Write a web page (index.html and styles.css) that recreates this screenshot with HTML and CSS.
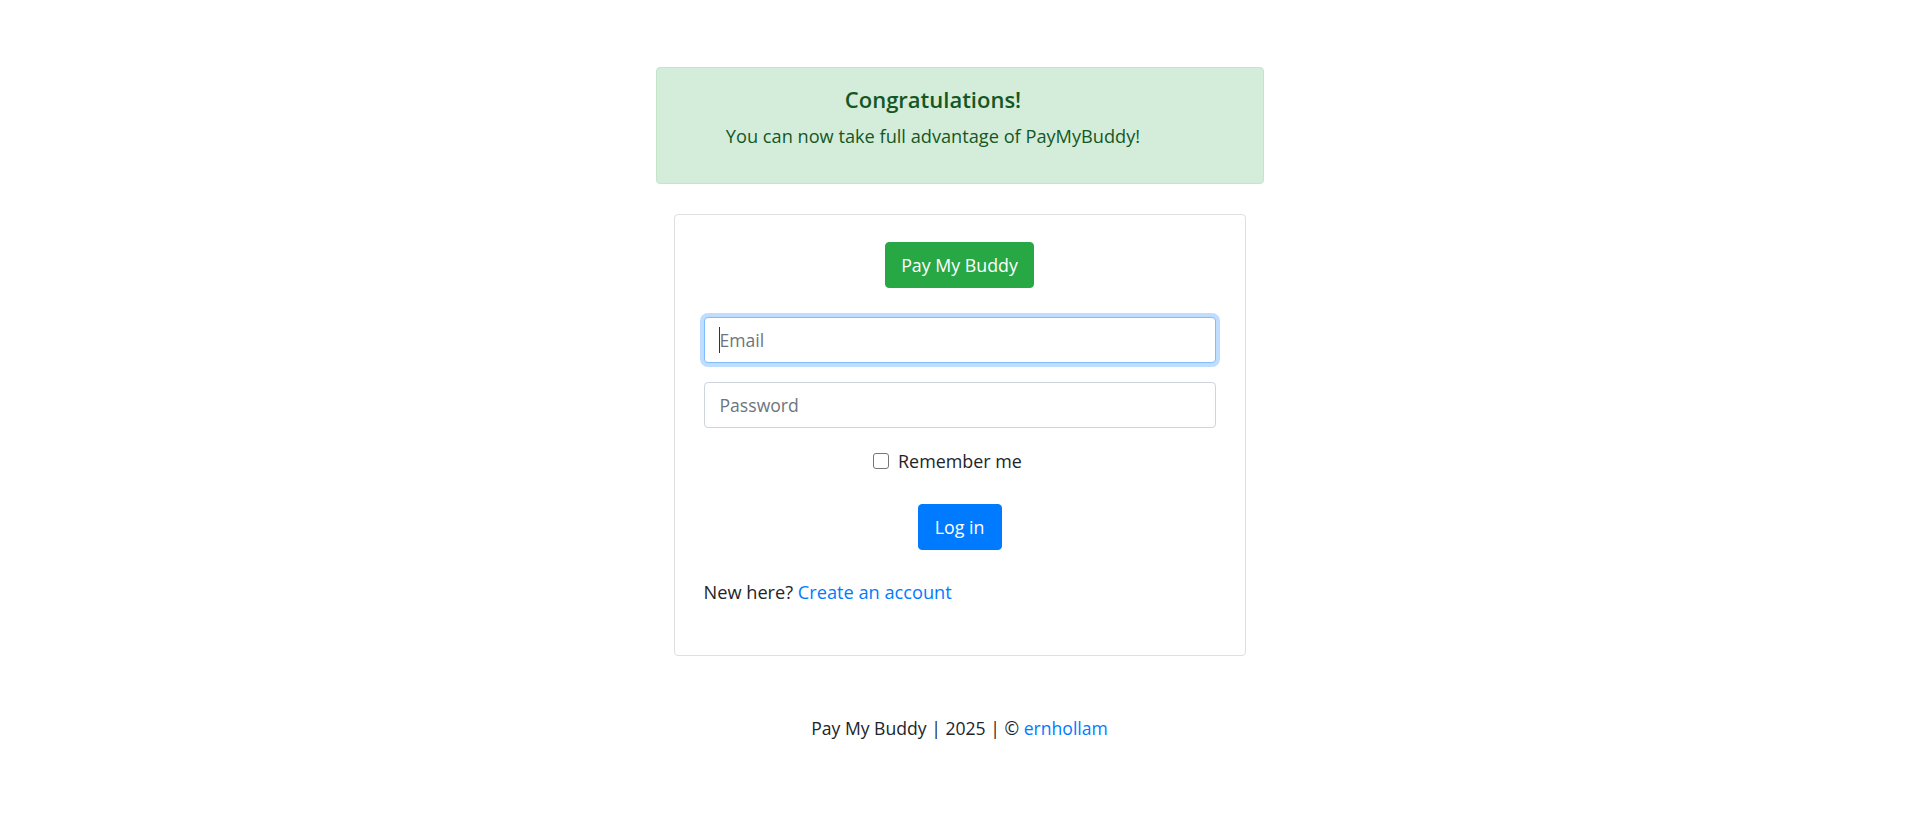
FILE: index.html
```html
<!DOCTYPE html>
<html lang="en">
<head>
<meta charset="utf-8">
<title>Pay My Buddy - Log in</title>
<link rel="stylesheet" href="styles.css">
</head>
<body>
<main class="page">
  <div class="alert">
    <h5 class="alert-heading">Congratulations!</h5>
    <p class="alert-text">You can now take full advantage of PayMyBuddy!</p>
  </div>

  <form class="card">
    <div class="brand-row">
      <a class="btn btn-success">Pay My Buddy</a>
    </div>
    <div class="field">
      <input class="input input-focus" type="email" placeholder="Email">
      <span class="caret"></span>
    </div>
    <div class="field">
      <input class="input" type="password" placeholder="Password">
    </div>
    <label class="remember">
      <input class="check" type="checkbox">
      <span>Remember me</span>
    </label>
    <div class="submit-row">
      <button class="btn btn-primary" type="button">Log in</button>
    </div>
    <p class="signup">New here? <a href="#" class="link">Create an account</a></p>
  </form>

  <footer class="footer">Pay My Buddy | 2025 | © <a href="#" class="link">ernhollam</a></footer>
</main>
</body>
</html>
```

FILE: styles.css
```css
* { box-sizing: border-box; }

html, body {
  margin: 0;
  padding: 0;
  background: #fff;
}

body {
  font-family: "Open Sans", "Noto Sans", sans-serif;
  font-size: 17.6px;
  color: #212529;
}

.page {
  display: flex;
  flex-direction: column;
  align-items: center;
  padding-top: 67px;
}

.alert {
  width: 608px;
  height: 117px;
  background: #d4edda;
  border: 1px solid #c3e6cb;
  border-radius: 4px;
  color: #155724;
  padding: 14px 77px 0 24px;
  text-align: center;
}

.alert-heading {
  margin: 0;
  font-size: 22px;
  font-weight: 600;
  line-height: 34px;
}

.alert-text {
  margin: 6px 0 0;
  font-size: 18.2px;
  line-height: 28px;
}

.card {
  margin-top: 30px;
  width: 572px;
  height: 442px;
  border: 1px solid #dfdfdf;
  border-radius: 4px;
  padding: 27px 29px 0 29px;
  display: flex;
  flex-direction: column;
}

.brand-row, .submit-row {
  display: flex;
  justify-content: center;
}

.btn {
  display: inline-block;
  height: 46px;
  padding: 0 15px;
  border: 1px solid transparent;
  border-radius: 4px;
  color: #fff;
  font-family: inherit;
  font-size: 17.8px;
  line-height: 44px;
  text-decoration: none;
  cursor: pointer;
}

.btn-success {
  background: #28a745;
  border-color: #28a745;
}

.btn-primary {
  background: #007bff;
  border-color: #007bff;
  width: 84px;
  padding: 0;
  text-align: center;
}

.field {
  position: relative;
  margin-top: 29px;
}

.field + .field {
  margin-top: 19px;
}

.input {
  display: block;
  width: 100%;
  height: 46px;
  padding: 0 15px;
  border: 1px solid #ced4da;
  border-radius: 4px;
  font-family: inherit;
  font-size: 17.6px;
  color: #495057;
  background: #fff;
  outline: none;
}

.input::placeholder {
  color: #6c757d;
  opacity: 1;
}

.input-focus {
  border-color: #80bdff;
  box-shadow: 0 0 0 4px rgba(0, 123, 255, 0.25);
}

.caret {
  position: absolute;
  left: 15px;
  top: 10px;
  width: 1px;
  height: 26px;
  background: #333;
}

.remember {
  margin-top: 18px;
  height: 29px;
  display: flex;
  align-items: center;
  justify-content: center;
  gap: 9px;
  padding-right: 24px;
  font-size: 17.9px;
}

.check {
  appearance: none;
  -webkit-appearance: none;
  margin: 0;
  width: 16px;
  height: 16px;
  border: 1px solid #767676;
  border-radius: 3px;
  background: #fff;
}

.submit-row {
  margin-top: 29px;
}

.signup {
  margin: 28px 0 0;
  font-size: 18.2px;
  line-height: 29px;
}

.link {
  color: #007bff;
  text-decoration: none;
}

.footer {
  margin-top: 58px;
  line-height: 29px;
  text-align: center;
}
```
